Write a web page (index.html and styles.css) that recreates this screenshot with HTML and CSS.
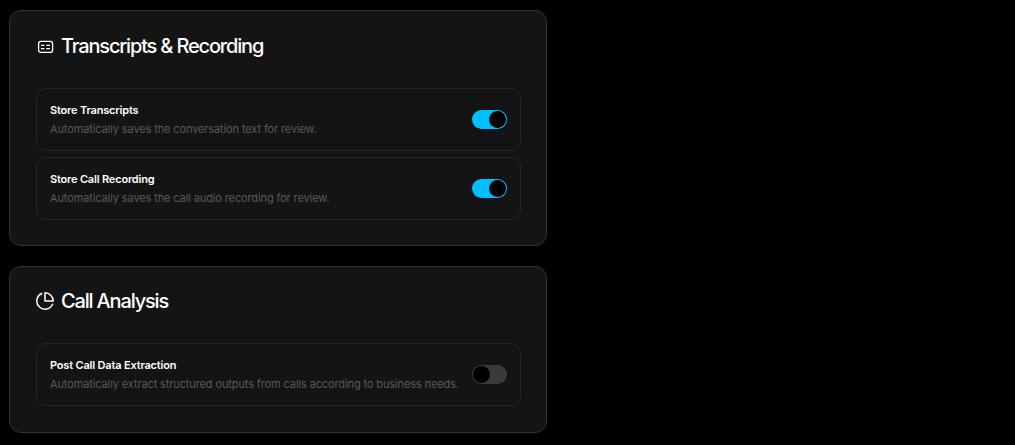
FILE: index.html
```html
<!DOCTYPE html>
<html lang="en">
<head>
    <meta charset="UTF-8">
    <meta name="viewport" content="width=device-width, initial-scale=1.0">
    <title>Call Settings</title>
    <link rel="stylesheet" href="styles.css">
</head>
<body>
    <div class="settings-column">
        <section class="card">
            <div class="card-title">
                <svg class="card-icon" viewBox="0 0 18 18" fill="none" stroke="currentColor">
                    <rect x="2.6" y="4.4" width="14" height="11" rx="2.5" stroke-width="1.3"/>
                    <path d="M5 8.4h3.4M10.2 8.4h3.8M5 11.6h3.4M10.2 11.6h3.8" stroke-width="1.4"/>
                </svg>
                <h2>Transcripts &amp; Recording</h2>
            </div>
            <div class="option-list">
                <div class="option">
                    <div class="option-text">
                        <h3>Store Transcripts</h3>
                        <p>Automatically saves the conversation text for review.</p>
                    </div>
                    <div class="toggle on"><span class="knob"></span></div>
                </div>
                <div class="option">
                    <div class="option-text">
                        <h3>Store Call Recording</h3>
                        <p>Automatically saves the call audio recording for review.</p>
                    </div>
                    <div class="toggle on"><span class="knob"></span></div>
                </div>
            </div>
        </section>

        <section class="card">
            <div class="card-title">
                <svg class="card-icon" viewBox="1 1 22 22" fill="none" stroke="currentColor" stroke-width="1.8" stroke-linecap="round" stroke-linejoin="round">
                    <path d="M21.21 15.89A10 10 0 1 1 8 2.83"/>
                    <path d="M22 12A10 10 0 0 0 12 2v10z"/>
                </svg>
                <h2>Call Analysis</h2>
            </div>
            <div class="option-list">
                <div class="option">
                    <div class="option-text">
                        <h3>Post Call Data Extraction</h3>
                        <p>Automatically extract structured outputs from calls according to business needs.</p>
                    </div>
                    <div class="toggle"><span class="knob"></span></div>
                </div>
            </div>
        </section>
    </div>
</body>
</html>
```

FILE: styles.css
```css
body {
    margin: 0;
    background: #000;
    color: #fff;
    font-family: 'Inter', 'Liberation Sans', sans-serif;
}

.settings-column {
    width: 538px;
    margin-left: 9px;
    padding-top: 10px;
    display: flex;
    flex-direction: column;
    gap: 20px;
}

.card {
    background: #141414;
    border: 1px solid #333;
    border-radius: 12px;
    padding: 20px 25px 25.3px 26px;
}

.card-title {
    display: flex;
    align-items: center;
    gap: 7px;
    height: 29px;
    margin-bottom: 27.5px;
}

.card-icon {
    width: 18px;
    height: 18px;
    flex: none;
}

h2 {
    margin: 0;
    font-size: 20px;
    font-weight: 500;
    letter-spacing: -1.17px;
}

.option-list {
    display: flex;
    flex-direction: column;
    gap: 6px;
}

.option {
    display: flex;
    align-items: center;
    justify-content: space-between;
    height: 61px;
    padding: 0 13px;
    border: 1px solid #262626;
    border-radius: 10px;
}

.option-text {
    margin-bottom: 2px;
}

h3 {
    margin: 2px 0 3px;
    font-size: 11px;
    line-height: 16px;
    font-weight: 600;
    letter-spacing: -0.18px;
}

p {
    margin: 0;
    font-size: 11px;
    line-height: 16px;
    color: #595959;
    letter-spacing: -0.12px;
}

.toggle {
    width: 35px;
    height: 19px;
    box-sizing: border-box;
    border-radius: 10px;
    background: #3a3a3a;
    display: flex;
    padding: 1px;
}

.toggle.on {
    background: #00bfff;
    justify-content: flex-end;
}

.knob {
    width: 17px;
    height: 17px;
    border-radius: 50%;
    background: #000;
}
```
